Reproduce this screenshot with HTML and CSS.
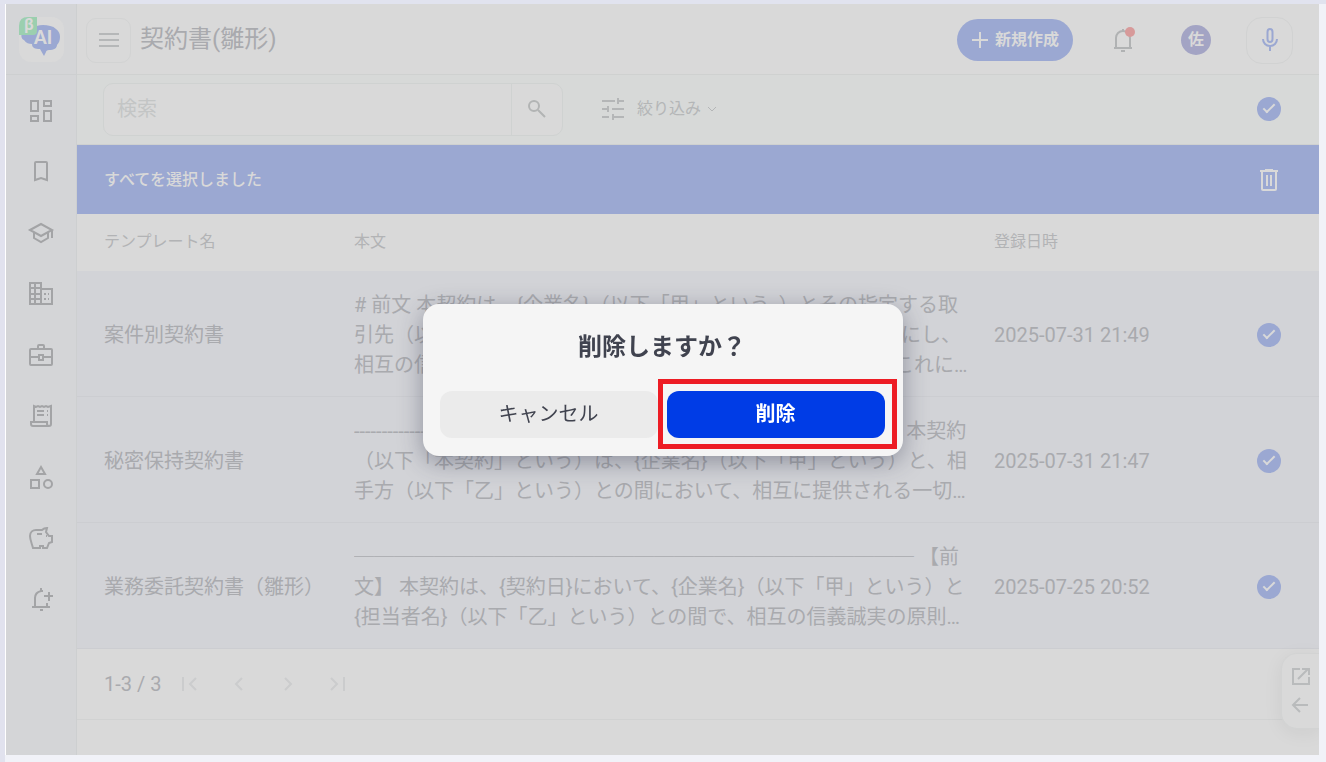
FILE: index.html
```html
<!DOCTYPE html>
<html lang="ja">
<head>
  <meta charset="UTF-8">
  <meta name="viewport" content="width=device-width, initial-scale=1.0">
  <title>契約書(雛形)</title>
  <link rel="stylesheet" href="styles.css">
</head>
<body>
  <div class="app">
    <aside class="sidebar">
      <a href="#" class="logo" aria-label="ホーム">
        <svg width="45" height="45" viewBox="0 0 45 45">
          <rect width="45" height="45" rx="12" fill="#d9d9d9"/>
          <path fill="#9ba8d2" d="M12 12C15 9 20 8 24 8c5 0 10 1 13 4 3 2 4 5 4 8s-1 6-3 8c0 3-3 5-8 5-2 0-3 1-3 2l-2 4-4-7c-5 0-8-1-8-5-3 0-6-1-8-4-3-1-3-5-2-7z"/>
          <path fill="#9bcfaf" d="M9 0h9v14q0 4-4 4H0V9q0-9 9-9z"/>
          <text x="5" y="13" class="logo-beta">β</text>
          <text x="15" y="27" class="logo-ai">AI</text>
        </svg>
      </a>
      <nav class="side-nav">
        <a href="#" aria-label="ダッシュボード"><svg viewBox="0 0 24 24"><path d="M2 2h7v10H2zM15 2h7v5h-7zM15 12h7v10h-7zM2 17h7v5H2z"/></svg></a>
        <a href="#" aria-label="ブックマーク"><svg viewBox="0 0 24 24"><path d="M6 3q0-1 1-1h10q1 0 1 1v17l-6-2-6 2z"/></svg></a>
        <a href="#" aria-label="研修"><svg viewBox="0 0 24 24"><path d="M1 9l11-6 11 6-11 6zM5 11v6l7 4 7-4v-6M23 9v8"/></svg></a>
        <a href="#" aria-label="企業"><svg viewBox="0 0 24 24"><path d="M1 1h11v21H1zM12 7h11v15H12M1 6h11M1 12h11M1 17h11M6 1v21M15 12h2M15 17h2M19 12h1M19 17h1"/></svg></a>
        <a href="#" aria-label="案件"><svg viewBox="0 0 24 24"><path d="M2 6h20q1 0 1 1v14q0 1-1 1H2q-1 0-1-1V7q0-1 1-1zM9 6V3q0-1 1-1h4q1 0 1 1v3M1 14h9M14 14h9M10 12h4v5h-4z"/></svg></a>
        <a href="#" aria-label="帳票"><svg viewBox="0 0 24 24"><path d="M5 18V2l2 1 2-1 2 1 2-1 2 1 2-1 2 1 3-1v18q0 2-2 2H4q-2 0-2-2v-2h16v2q0 2 2 2M8 7h7M8 11h7M18 7h1M18 11h1"/></svg></a>
        <a href="#" aria-label="カテゴリ"><svg viewBox="0 0 24 24"><path d="M12 2l4 7H8zM2 15h8v8H2z"/><circle cx="19" cy="19" r="4"/></svg></a>
        <a href="#" aria-label="費用"><svg viewBox="0 0 24 24"><path d="M4 22C3 18 1 14 1 10c0-4 3-6 6-6h6c1-1 3-2 5-2l-1 4 3 4h3v6l-3 1-2 5h-4v-2h-3v2zM8 8h5M17 10h1"/></svg></a>
        <a href="#" aria-label="通知設定"><svg viewBox="0 0 24 24"><path d="M3 20h18M6 20v-9c0-4 2-6 6-7h2M18 20v-4M12 1v3M11 23h3M15 9h9M20 5v9"/></svg></a>
      </nav>
    </aside>

    <main class="main">
      <header class="header">
        <button class="menu-button" aria-label="メニュー"><svg width="24" height="24" viewBox="0 0 24 24"><path d="M2 6h20M2 12h20M2 18h20"/></svg></button>
        <h1>契約書(雛形)</h1>
        <button class="create-button"><svg width="18" height="18" viewBox="0 0 18 18"><path d="M1 9h16M9 1v16"/></svg>新規作成</button>
        <button class="bell-button" aria-label="お知らせ">
          <svg width="24" height="26" viewBox="0 0 24 26"><path d="M3 21h18M5 21V11c0-4 3-7 7-7s7 3 7 7v10M12 2v2M10 24h4"/><circle cx="19" cy="5" r="5" class="bell-dot"/></svg>
        </button>
        <button class="avatar">佐</button>
        <button class="mic-button" aria-label="音声入力"><svg width="24" height="24" viewBox="0 0 24 24"><path d="M12 1c1.700 0 2.500 1 2.500 3v7c0 2-1 3-2.500 3s-2.500-1-2.500-3V4c0-2 1-3 2.500-3zM5 11c0 4 3 7 7 7s7-3 7-7M12 18v5"/></svg></button>
      </header>

      <section class="filter-bar">
        <form class="search">
          <input type="text" placeholder="検索" aria-label="検索">
          <button type="button" aria-label="検索する"><svg width="18" height="18" viewBox="0 0 18 18"><circle cx="6" cy="6" r="5"/><path d="M10 10l7 7"/></svg></button>
        </form>
        <button class="narrow-button">
          <svg width="24" height="24" viewBox="0 0 24 24"><path d="M1 4h13M17 4h6M17 1v6M1 12h5M11 12h12M7 9v6M1 20h7M12 20h11M12 17v6"/></svg>
          絞り込み
          <svg class="caret" width="10" height="10" viewBox="0 0 10 10"><path d="M1 3l4 4 4-4"/></svg>
        </button>
        <input type="checkbox" class="check" aria-label="すべて選択" checked>
      </section>

      <section class="select-bar">
        <span>すべてを選択しました</span>
        <button aria-label="選択した項目を削除"><svg width="20" height="24" viewBox="0 0 20 24"><path d="M1 3h18M6 2h8M3 3v18q0 1 1 1h12q1 0 1-1V3M8 7v11M12 7v11"/></svg></button>
      </section>

      <table class="templates">
        <thead>
          <tr>
            <th class="col-name">テンプレート名</th>
            <th>本文</th>
            <th class="col-date">登録日時</th>
            <th class="col-check"></th>
          </tr>
        </thead>
        <tbody>
          <tr>
            <td>案件別契約書</td>
            <td><p># 前文 本契約は、{企業名}（以下「甲」という。）とその指定する取引先（以下「乙」という）は、{契約名}の{取引条件}を明らかにし、相互の信頼関係に基づき公正な取引を行うことを目的とし、これに基づき次のとおり契約を締結する。</p></td>
            <td>2025-07-31 21:49</td>
            <td><input type="checkbox" class="check" aria-label="案件別契約書" checked></td>
          </tr>
          <tr>
            <td>秘密保持契約書</td>
            <td><p>--------------------------------------------------------------------------------------------------- 本契約（以下「本契約」という）は、{企業名}（以下「甲」という）と、相手方（以下「乙」という）との間において、相互に提供される一切の秘密情報の取扱いについて定める。</p></td>
            <td>2025-07-31 21:47</td>
            <td><input type="checkbox" class="check" aria-label="秘密保持契約書" checked></td>
          </tr>
          <tr>
            <td>業務委託契約書（雛形）</td>
            <td><p>──────────────────────────── 【前文】 本契約は、{契約日}において、{企業名}（以下「甲」という）と{担当者名}（以下「乙」という）との間で、相互の信義誠実の原則に基づき、次のとおり締結する。</p></td>
            <td>2025-07-25 20:52</td>
            <td><input type="checkbox" class="check" aria-label="業務委託契約書（雛形）" checked></td>
          </tr>
        </tbody>
      </table>

      <footer class="pager">
        <span>1-3 / 3</span>
        <button aria-label="最初のページ" disabled><svg width="18" height="18" viewBox="0 0 18 18"><path d="M2 2v14M15 3L9 9l6 6"/></svg></button>
        <button aria-label="前のページ" disabled><svg width="18" height="18" viewBox="0 0 18 18"><path d="M12 3L6 9l6 6"/></svg></button>
        <button aria-label="次のページ" disabled><svg width="18" height="18" viewBox="0 0 18 18"><path d="M6 3l6 6-6 6"/></svg></button>
        <button aria-label="最後のページ" disabled><svg width="18" height="18" viewBox="0 0 18 18"><path d="M3 3l6 6-6 6M16 2v14"/></svg></button>
      </footer>
    </main>

    <div class="side-tab">
      <button aria-label="別ウィンドウで開く"><svg width="18" height="18" viewBox="0 0 18 18"><path d="M8 1H1v15h16V9M6 11L16 1M10 1h7v6"/></svg></button>
      <button aria-label="開く"><svg width="18" height="18" viewBox="0 0 18 18"><path d="M8 2L1 9l7 7M1 9h15"/></svg></button>
    </div>
  </div>

  <div class="overlay">
    <div class="dialog" role="dialog" aria-modal="true" aria-labelledby="dialogTitle">
      <h2 id="dialogTitle">削除しますか？</h2>
      <div class="dialog-buttons">
        <button class="cancel">キャンセル</button>
        <button class="delete">削除</button>
      </div>
    </div>
  </div>
</body>
</html>
```
FILE: styles.css
```css
* { box-sizing: border-box; }
body {
  margin: 0;
  padding: 4px 7px 7px 5px;
  min-height: 100vh;
  display: flex;
  background: linear-gradient(#e1e3ef, #e1e3ef) top / 100% 4px no-repeat,
    linear-gradient(#e1e2ee, #e1e2ee) left / 5px 100% no-repeat, #f1f2f8;
  color: #a9aaae;
  font-family: Roboto, "Noto Sans CJK JP", sans-serif;
  font-size: 20px;
  line-height: 30px;
}
button {
  display: flex;
  align-items: center;
  justify-content: center;
  padding: 0;
  border: none;
  background: none;
  color: inherit;
  font: inherit;
  cursor: pointer;
}
svg {
  display: block;
  flex: none;
  fill: none;
  stroke: currentColor;
  stroke-width: 2;
  overflow: visible;
}

.app {
  position: relative;
  flex: 1;
  display: flex;
  min-width: 0;
  background: #d9d9d9;
  border-left: 1px solid #fff;
  overflow: hidden;
}

.sidebar {
  flex: none;
  width: 71px;
  background: #d4d5d7;
  border-right: 1px solid #cdcfd0;
}
.logo {
  display: flex;
  justify-content: center;
  height: 71px;
  padding-top: 13px;
  border-bottom: 1px solid #cdcfd0;
}
.logo svg { stroke: none; }
.logo-beta { font: bold 16px Roboto, sans-serif; fill: #d9d9d9; }
.logo-ai { font: 900 18px Lato, sans-serif; fill: #d9d9d9; }
.side-nav { padding-top: 5px; }
.side-nav a {
  display: flex;
  align-items: center;
  justify-content: center;
  height: 61px;
  color: #a3a4a6;
}
.side-nav svg { width: 24px; height: 24px; }

.main { flex: 1; min-width: 0; }

.header {
  display: flex;
  align-items: center;
  height: 71px;
  padding: 2px 26px 0 9px;
  border-bottom: 1px solid #cfd1d0;
}
.menu-button {
  width: 45px;
  height: 45px;
  border: 1px solid #d2d3d3;
  border-radius: 10px;
  color: #b5b7b8;
}
h1 {
  margin: 0 auto 0 9px;
  padding-bottom: 2px;
  font-size: 24px;
  font-weight: 400;
}
.create-button {
  gap: 6px;
  width: 116px;
  height: 42px;
  margin-right: 38px;
  border-radius: 21px;
  background: #9ba8d2;
  color: #d9d9d9;
  font-size: 16px;
  font-weight: 700;
}
.bell-button { margin-right: 46px; color: #b0b2b3; }
.bell-dot { fill: #d79a9a; stroke: none; }
.avatar {
  width: 30px;
  height: 30px;
  margin-right: 35px;
  border-radius: 50%;
  background: #a3a4c4;
  color: #d9d9d9;
  font-size: 16px;
  font-weight: 700;
}
.mic-button {
  width: 47px;
  height: 47px;
  border: 1px solid #d1d2d2;
  border-radius: 16px;
  color: #9ba8d2;
}

.filter-bar {
  display: flex;
  align-items: center;
  height: 70px;
  padding: 0 38px 1px 26px;
  background: #d7d9d8;
  border-bottom: 1px solid #cfd1d0;
}
.search {
  display: flex;
  width: 460px;
  height: 53px;
  background: #d9d9d9;
  border: 1px solid #cfd2d1;
  border-radius: 10px;
}
.search input {
  flex: 1;
  min-width: 0;
  padding: 0 13px;
  border: none;
  outline: none;
  background: none;
  color: inherit;
  font: inherit;
}
.search input::placeholder { color: #c3c5c5; }
.search button {
  width: 51px;
  border-left: 1px solid #cfd2d1;
  color: #b2b4b4;
}
.narrow-button {
  margin: 0 auto 0 38px;
  color: #b4b6b7;
  font-size: 16px;
}
.narrow-button svg { margin-right: 12px; }
.narrow-button .caret { margin: 0 0 0 6px; stroke-width: 1; }

.check {
  appearance: none;
  display: grid;
  place-items: center;
  width: 24px;
  height: 24px;
  margin: 0;
  border-radius: 50%;
  background: #9ba8d2;
}
.check:checked::before {
  content: "";
  width: 10px;
  height: 4px;
  margin-bottom: 4px;
  border-left: 2px solid #d9d9d9;
  border-bottom: 2px solid #d9d9d9;
  transform: rotate(-45deg);
}

.select-bar {
  display: flex;
  align-items: center;
  justify-content: space-between;
  height: 69px;
  padding: 0 40px 0 27px;
  background: #9ba8d2;
  color: #d9d9d9;
  font-size: 16px;
  font-weight: 500;
}

.templates {
  width: 100%;
  table-layout: fixed;
  border-collapse: separate;
  border-spacing: 0;
}
.templates th {
  height: 57px;
  padding: 0 0 2px 26px;
  color: #b2b3b5;
  font-size: 16px;
  font-weight: 400;
  text-align: left;
}
.templates td {
  height: 126px;
  padding: 2px 0 0 26px;
  background: #d2d3d7;
  border-bottom: 1px solid #cccdd1;
}
.templates th:first-child,
.templates td:first-child { padding-left: 27px; }
.templates p {
  display: -webkit-box;
  margin: 0;
  overflow: hidden;
  overflow-wrap: anywhere;
  -webkit-box-orient: vertical;
  -webkit-line-clamp: 3;
}
.col-name, .col-date { width: 251px; }
.templates .col-check { width: 100px; }
.templates td:last-child { padding: 2px 38px 0 38px; }

.pager {
  display: flex;
  align-items: center;
  gap: 31px;
  height: 71px;
  padding-left: 27px;
  border-bottom: 1px solid #d1d2d2;
}
.pager span { margin-right: -11px; }
.pager button { color: #cbcccd; }

.side-tab {
  position: absolute;
  right: 0;
  bottom: 26px;
  display: flex;
  flex-direction: column;
  align-items: center;
  gap: 10px;
  width: 38px;
  padding: 14px 0;
  border: 1px solid #d2d3d3;
  border-right: none;
  border-radius: 16px 0 0 16px;
  background: #d9d9d9;
  box-shadow: 0 4px 20px rgba(0, 0, 0, 0.06);
  color: #b9bbbc;
}

.overlay {
  position: fixed;
  inset: 4px 7px 7px 6px;
  display: flex;
  align-items: center;
  justify-content: center;
}
.dialog {
  width: 480px;
  max-width: 90%;
  padding: 25px 18px 18px 17px;
  border-radius: 16px;
  background: #f5f5f5;
  box-shadow: 0 6px 24px rgba(40, 45, 70, 0.4);
  color: #40434f;
}
.dialog h2 {
  margin: 0 0 26px;
  font-size: 24px;
  line-height: 36px;
  text-align: center;
}
.dialog-buttons {
  display: grid;
  grid-template-columns: 1fr 1fr;
  gap: 9px;
}
.dialog-buttons button {
  height: 47px;
  border-radius: 12px;
}
.dialog-buttons .cancel { background: #ebebeb; }
.dialog-buttons .delete {
  position: relative;
  background: #003ce6;
  color: #fff;
  font-weight: 700;
}
/* red frame around the delete button */
.delete::after {
  content: "";
  position: absolute;
  inset: -12px -12px -11px -9px;
  border: 5px solid #ed1c24;
}
```
